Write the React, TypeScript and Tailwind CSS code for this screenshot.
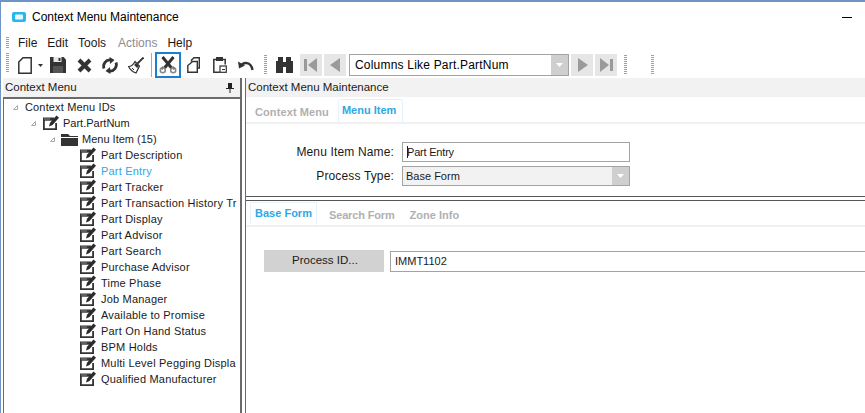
import React from "react";

const Grip = ({ h = 18, className = "" }: { h?: number; className?: string }) => (
  <svg width="3" height={h} className={"shrink-0 " + className}>
    {Array.from({ length: Math.floor(h / 2) }).map((_, i) => (
      <rect key={i} x="0" y={i * 2} width="3" height="1" fill="#a0a0a0" />
    ))}
  </svg>
);

const FormIcon = () => (
  <svg width="18" height="16" viewBox="0 0 18 16" className="shrink-0">
    <path d="M1.900 5v9.100H14.100V8" fill="none" stroke="#333" strokeWidth="1.800" />
    <rect x="1" y="2.500" width="11" height="3.200" fill="#333" />
    <rect x="2.500" y="3.500" width="1" height="1" fill="#ddd" />
    <rect x="4.500" y="3.500" width="1" height="1" fill="#ddd" />
    <rect x="6.500" y="3.500" width="1" height="1" fill="#ddd" />
    <path d="M7 11.500l1-3.700L14.500 0.500 17 2.800 10.500 10z" fill="#2b2b2b" />
  </svg>
);

const Tri = () => (
  <svg width="7" height="7" viewBox="0 0 7 7" className="shrink-0">
    <path d="M5.500 1.500v4h-4z" fill="none" stroke="#aaa" />
  </svg>
);

const Caret = () => (
  <svg width="7" height="4" viewBox="0 0 7 4"><path d="M0 0h7L3.500 4z" fill="#fff" /></svg>
);

const DropBtn = () => (
  <span className="flex w-[17px] self-stretch items-center justify-center bg-[#cfcfcf]"><Caret /></span>
);

const NavBtn = ({ d }: { d: string }) => (
  <span className="flex h-[22px] w-[22px] items-center justify-center bg-[#e6e6e6]">
    <svg width="16" height="16" viewBox="0 0 16 16"><path d={d} fill="#9a9a9a" /></svg>
  </span>
);

const items = ["Part Description","Part Entry","Part Tracker","Part Transaction History Tr","Part Display","Part Advisor","Part Search","Purchase Advisor","Time Phase","Job Manager","Available to Promise","Part On Hand Status","BPM Holds","Multi Level Pegging Displa","Qualified Manufacturer"];

export default function App() {
  return (
    <div className="flex h-[413px] w-[865px] flex-col overflow-hidden border-t-2 border-l border-[#6d94c4] bg-white text-[11px] leading-none text-[#1a1a1a] [font-family:'Liberation_Sans',Arial,sans-serif]">
      {/* title */}
      <div className="flex h-[29px] items-center pl-[11px] pr-[13px] pt-[1px]">
        <svg width="14" height="10" viewBox="0 0 14 10" className="shrink-0"><rect width="14" height="10" rx="2" fill="#29b6ea"/><rect x="3" y="2.500" width="8" height="5" rx="1" fill="#e8f7fd"/></svg>
        <span className="ml-[6px] text-[12px] text-black">Context Menu Maintenance</span>
        <span className="ml-auto h-[1px] w-[10px] bg-black" />
      </div>
      {/* menu */}
      <div className="flex h-[21px] items-center pl-[5px] pt-[3px] text-[12px]">
        <Grip h={12} />
        <span className="ml-[9px]">File</span>
        <span className="ml-[10px]">Edit</span>
        <span className="ml-[10px]">Tools</span>
        <span className="ml-[12px] text-[#8c8c94]">Actions</span>
        <span className="ml-[10px]">Help</span>
      </div>
      {/* toolbar */}
      <div className="flex h-[26px] items-center pl-[5px]">
        <Grip h={20} className="-mt-[4px]" />
        <svg width="14" height="17" viewBox="0 0 14 17" className="ml-[9px] shrink-0"><path d="M5 .8h8.200v15.400H.8V5z" fill="none" stroke="#333" strokeWidth="1.500"/></svg>
        <svg width="5" height="3" viewBox="0 0 5 3" className="ml-[6px] shrink-0"><path d="M0 0h5L2.500 3z" fill="#333"/></svg>
        <svg width="16" height="16" viewBox="0 0 16 16" className="ml-[7px] shrink-0"><path d="M0 0h13.500L16 2.500V16H0z" fill="#333"/><rect x="3.500" y="0" width="8" height="5" fill="#e8e8e8"/><rect x="8.500" y="1" width="2" height="3" fill="#333"/><rect x="3" y="9" width="10" height="7" fill="#555"/></svg>
        <svg width="15" height="15" viewBox="0 0 15 15" className="ml-[11px] shrink-0"><path d="M2 2l11 11M13 2L2 13" stroke="#333" strokeWidth="4"/></svg>
        <svg width="16" height="17" viewBox="0 0 16 17" className="ml-[10px] shrink-0" fill="none" stroke="#333" strokeWidth="2.800"><path d="M2 11.500C.5 7 4 2.500 8.500 3"/><path d="M14 5.500c1.500 4.500-2 9-6.500 8.500"/><path d="M7.500 0l5 3-4.500 4zM8.500 17l-5-3 4.500-4z" fill="#333" stroke="none"/></svg>
        <svg width="16" height="17" viewBox="0 0 16 17" className="ml-[10px] shrink-0" fill="none" stroke="#333"><path d="M15.500 .5L9.500 6.500" strokeWidth="1.800"/><path d="M7 4.500l4.500 4.500-3.500 7C5 15 2 12.500.5 9.500 3 9.500 5.500 7.500 7 4.500z" strokeWidth="1.200" fill="#fff"/><path d="M7 7l3 3" strokeWidth="2.500"/><path d="M4 11l2 2" /></svg>
        <span className="ml-[7px] h-[24px] w-[1px] shrink-0 bg-[#aaa]" />
        <span className="ml-[3px] flex h-[26px] w-[26px] shrink-0 items-center justify-center border-2 border-[#1a7fd0]">
          <svg width="18" height="18" viewBox="0 0 18 18" fill="none"><path d="M3.500 1l9 11M14.500 1l-9 11" stroke="#333" strokeWidth="3"/><path d="M4.500 11l-2 2M13.500 11l2 2" stroke="#333" strokeWidth="2"/><circle cx="3.800" cy="14.200" r="2.500" stroke="#888" strokeWidth="1.600"/><circle cx="14.200" cy="14.200" r="2.500" stroke="#888" strokeWidth="1.600"/></svg>
        </span>
        <svg width="16" height="16" viewBox="0 0 16 16" className="ml-[6px] shrink-0" fill="none" stroke="#333" strokeWidth="1.400"><path d="M4.500 4.500V3l2.500-2.300h5.300V11H10"/><path d="M3 6.700l2.500-2.200h4.800v10.800H.8V8.500z" fill="#fff"/></svg>
        <svg width="14" height="16" viewBox="0 0 14 16" className="ml-[10px] shrink-0" fill="none" stroke="#333" strokeWidth="1.500"><path d="M3.500 2.500H.8v12.800h6"/><path d="M9.500 2.500h2.700v5"/><rect x="3" y="0" width="7" height="4" fill="#333" stroke="none"/><rect x="7" y="9" width="6.300" height="6.300" fill="#fff" strokeWidth="1.200"/><path d="M9 12.500h3" strokeWidth="1"/></svg>
        <svg width="16" height="11" viewBox="0 0 16 11" className="ml-[11px] shrink-0" fill="none"><path d="M3 6c2-4 10-5 11.500 4" stroke="#333" strokeWidth="2.400"/><path d="M0 1.500l7 4-6 3z" fill="#333"/></svg>
        <Grip h={20} className="ml-[10px]" />
        <svg width="19" height="16" viewBox="0 0 19 16" fill="#333" className="ml-[8px] shrink-0"><rect x="3" y="0" width="5" height="4"/><rect x="11" y="0" width="5" height="4"/><rect x="1" y="4" width="7" height="12"/><rect x="11" y="4" width="7" height="12"/><rect x="8" y="5" width="3" height="5"/></svg>
        <span className="ml-[6px]"><NavBtn d="M1 2h3v12H1zM14 1v14L5 8z" /></span>
        <span className="ml-[2px]"><NavBtn d="M13 1v14L3 8z" /></span>
        <div className="ml-[3px] flex h-[22px] w-[220px] shrink-0 items-stretch border border-[#a3a3a3] text-[12px]">
          <span className="flex flex-1 items-center pl-[5px] tracking-[0.2px] text-black">Columns Like Part.PartNum</span>
          <DropBtn />
        </div>
        <span className="ml-[2px]"><NavBtn d="M4 1v14l10-7z" /></span>
        <span className="ml-[2px]"><NavBtn d="M2 1v14l9-7zM12 2h3v12h-3z" /></span>
        <Grip h={20} className="ml-[7px]" />
        <Grip h={20} className="ml-[24px]" />
      </div>
      {/* body */}
      <div className="flex min-h-0 flex-1">
        <div className="flex w-[241px] shrink-0 flex-col border-r-2 border-[#6b6b6b] pl-[2px]">
          <div className="flex h-[19px] shrink-0 items-center justify-between bg-[#f2f2f2] pl-[2px] pr-[6px] text-[11.500px]">
            <span>Context Menu</span>
            <svg width="8" height="10" viewBox="0 0 8 10"><path d="M2 0h4v5h2v1H4.500v4h-1V6H0V5h2z" fill="#222"/></svg>
          </div>
          <div className="flex-1 border-l border-t-2 border-[#6b6b6b]">
            <div className="flex h-4 items-center pl-[8px]"><Tri /><span className="ml-[6px] tracking-[0.15px]">Context Menu IDs</span></div>
            <div className="flex h-4 items-center pl-[26px]"><Tri /><span className="ml-[5px]"><FormIcon /></span><span className="ml-[3px]">Part.PartNum</span></div>
            <div className="flex h-4 items-center pl-[45px]"><Tri />
              <svg width="17" height="14" viewBox="0 0 17 14" className="ml-[5px] shrink-0"><path d="M0 2h7l2 2h8v1H0z" fill="#333"/><rect y="6" width="17" height="8" fill="#333"/></svg>
              <span className="ml-[4px]">Menu Item (15)</span></div>
            {items.map((t, i) => (
              <div key={t} className="flex h-4 items-center pl-[75px]">
                <FormIcon />
                <span className={"ml-[4px] whitespace-nowrap tracking-[0.2px] " + (i === 1 ? "text-[#2fa8e4]" : "")}>{t}</span>
              </div>
            ))}
          </div>
        </div>
        <div className="ml-[3px] flex min-w-0 flex-1 flex-col border-l border-[#6b6b6b]">
          <div className="flex h-[19px] shrink-0 items-center bg-[#f2f2f2] pl-[2px] text-[11.500px]">Context Menu Maintenance</div>
          <div className="flex h-[27px] shrink-0 items-end border-b-2 border-[#f0f0f0] pl-[9px] font-bold">
            <span className="mb-[4px] tracking-[0.1px] text-[#b0b0b0]">Context Menu</span>
            <span className="ml-[9px] flex h-[23px] w-[65px] items-start rounded-t-[2px] border border-b-0 border-[#e6f2fb] pl-[3px] pt-[5px] text-[#2fa8e4]">Menu Item</span>
          </div>
          <div className="flex h-[73px] shrink-0 flex-col gap-[4px] border-b border-[#555] pt-[18px] text-[12px]">
            <div className="flex items-center">
              <span className="w-[148px] text-right tracking-[0.15px]">Menu Item Name:</span>
              <span className="ml-[8px] flex h-[20px] w-[228px] items-center border border-[#a3a3a3] pl-[4px] text-[11px] tracking-[-0.2px]"><span className="-mr-[1px] h-[12px] w-[1px] bg-[#1a1a50]" />Part Entry</span>
            </div>
            <div className="flex items-center">
              <span className="w-[148px] text-right tracking-[0.15px]">Process Type:</span>
              <span className="ml-[8px] flex h-[20px] w-[228px] items-stretch border border-[#a3a3a3] bg-[#f2f2f2] text-[11px]"><span className="flex flex-1 items-center pl-[3px]">Base Form</span><DropBtn /></span>
            </div>
          </div>
          <div className="mt-[3px] flex h-[27px] shrink-0 items-end border-t border-[#555]">
            <div className="flex h-full w-full items-end border-b-2 border-[#f0f0f0] pl-[4px] font-bold">
              <span className="flex h-[23px] w-[67px] items-start justify-center rounded-t-[2px] border border-b-0 border-[#e6f2fb] pt-[5px] text-[#2fa8e4]">Base Form</span>
              <span className="ml-[12px] mb-[4px] tracking-[-0.15px] text-[#b0b0b0]">Search Form</span>
              <span className="ml-[15px] mb-[4px] text-[#b0b0b0]">Zone Info</span>
            </div>
          </div>
          <div className="flex items-center pl-[18px] pt-[23px]">
            <span className="flex h-[22px] w-[120px] shrink-0 items-center justify-center bg-[#d2d2d2] pl-[2px] text-[11.500px]">Process ID...</span>
            <span className="ml-[6px] -mr-[2px] flex h-[21px] flex-1 items-center border border-[#a3a3a3] pl-[4px]">IMMT1102</span>
          </div>
        </div>
      </div>
    </div>
  );
}
